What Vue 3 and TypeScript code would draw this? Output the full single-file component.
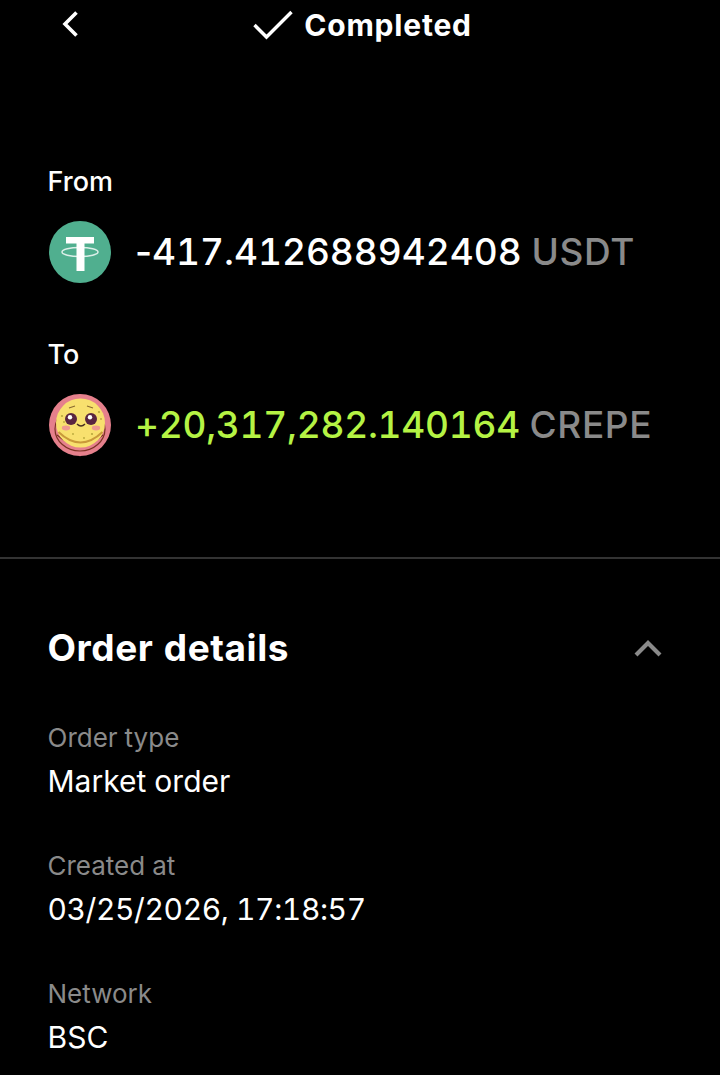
<template>
  <div class="page">
    <header class="topbar">
      <svg class="back" width="20" height="28" viewBox="0 0 20 28">
        <path d="M16.5 2.5 L5 14 L16.5 25.5" fill="none" stroke="#fff" stroke-width="3.6" />
      </svg>
      <div class="status">
        <svg width="40" height="30" viewBox="0 0 40 30">
          <path d="M1.5 15 L13.5 27 L38.5 2" fill="none" stroke="#fff" stroke-width="3.4" />
        </svg>
        <span>Completed</span>
      </div>
    </header>

    <section class="swap">
      <div class="side-label">From</div>
      <div class="amount-row">
        <svg class="coin" width="64" height="64" viewBox="0 0 64 64">
          <circle cx="32" cy="32" r="31" fill="#50af8f" />
          <path d="M18 17 H46 V23.5 H36.5 V51 H28.5 V23.5 H18 Z" fill="#fff" />
          <ellipse cx="32" cy="32" rx="18" ry="4.5" fill="none" stroke="#fff" stroke-width="1.5" opacity="0.8" />
        </svg>
        <div class="amount"><span class="sign">-</span>417.412688942408 <span class="symbol">USDT</span></div>
      </div>

      <div class="side-label to">To</div>
      <div class="amount-row">
        <svg class="coin" width="64" height="64" viewBox="0 0 64 64">
          <circle cx="32" cy="32" r="31" fill="#e5808c" />
          <ellipse cx="32" cy="36" rx="25" ry="22" fill="none" stroke="#7c3324" stroke-width="1.2" />
          <path d="M9 42 Q32 62 55 42" fill="none" stroke="#7c3324" stroke-width="1.2" />
          <circle cx="32.5" cy="30" r="24.5" fill="#f8e06e" />
          <path d="M10.5 39 Q32.5 60 54.5 39" fill="none" stroke="#c99a3a" stroke-width="2" />
          <circle cx="23" cy="26" r="6" fill="#5a2540" />
          <circle cx="43" cy="26" r="6" fill="#5a2540" />
          <circle cx="22" cy="24.2" r="2.2" fill="#fff" />
          <circle cx="42" cy="24.2" r="2.2" fill="#fff" />
          <ellipse cx="18" cy="35" rx="4.2" ry="2.4" fill="#f09a8f" />
          <ellipse cx="48" cy="35" rx="4.2" ry="2.4" fill="#f09a8f" />
          <path d="M29 31 Q33 35 37 31" fill="none" stroke="#4a3020" stroke-width="1.4" />
          <path d="M21 15 L27 13 M45 15 L39 13" fill="none" stroke="#8a6a30" stroke-width="1.2" />
          <g fill="#b8a83c">
            <circle cx="14" cy="23" r="1.1" />
            <circle cx="16" cy="29" r="0.9" />
            <circle cx="51" cy="19" r="1.1" />
            <circle cx="53" cy="26" r="0.9" />
            <circle cx="44" cy="41" r="1.1" />
            <circle cx="36" cy="45" r="0.9" />
            <circle cx="25" cy="41" r="0.9" />
          </g>
          <path d="M30 61 L34 61 L32 63.5 Z" fill="#e5808c" />
        </svg>
        <div class="amount gain">+20,317,282.140164 <span class="symbol">CREPE</span></div>
      </div>
    </section>

    <hr class="divider" />

    <section class="details">
      <div class="details-head">
        <h2>Order details</h2>
        <svg width="30" height="18" viewBox="0 0 30 18">
          <path d="M3 16 L15 4 L27 16" fill="none" stroke="#8a8a8a" stroke-width="4.2" />
        </svg>
      </div>
      <div v-for="row in rows" :key="row.label" class="detail">
        <div class="detail-label">{{ row.label }}</div>
        <div class="detail-value" :class="{ stamp: row.stamp }">{{ row.value }}</div>
      </div>
    </section>
  </div>
</template>

<script setup lang="ts">
const rows = [
  { label: 'Order type', value: 'Market order' },
  { label: 'Created at', value: '03/25/2026, 17:18:57', stamp: true },
  { label: 'Network', value: 'BSC' },
]
</script>

<style>
html,
body {
  background: #000;
}
</style>

<style scoped>
.page {
  height: 1075px;
  overflow: hidden;
  background: #000;
  color: #fff;
  font-family: Inter, "Noto Sans", sans-serif;
  font-variant-numeric: tabular-nums;
}

.topbar {
  display: flex;
  align-items: center;
  justify-content: center;
  height: 50px;
  position: relative;
}

.back {
  position: absolute;
  left: 60px;
  top: 10px;
}

.status {
  display: flex;
  align-items: center;
  gap: 11px;
  margin-left: 5px;
  font-size: 30px;
  font-weight: 700;
  letter-spacing: 0.8px;
}

.swap {
  padding: 114px 48px 0;
}

.side-label {
  margin-left: -0.5px;
  font-size: 27px;
  line-height: 36px;
  font-weight: 500;
}

.side-label.to {
  margin-top: 53px;
}

.amount-row {
  display: flex;
  align-items: center;
  gap: 24px;
  margin-top: 20px;
  height: 64px;
}

.coin {
  flex: none;
}

.amount {
  margin-left: -1px;
  font-size: 37px;
  font-weight: 500;
  white-space: nowrap;
  position: relative;
  top: -1px;
}

.sign {
  font-variant-numeric: normal;
}

.gain {
  color: #b5f344;
  letter-spacing: -0.25px;
}

.symbol {
  color: #8a8a8a;
  letter-spacing: 0.6px;
}

.divider {
  margin: 100px 0 0;
  border: 0;
  height: 2px;
  background: #333;
}

.details {
  padding: 0 48px;
}

.details-head {
  display: flex;
  align-items: center;
  justify-content: space-between;
  padding: 65px 9px 49px 0;
}

h2 {
  margin: 0 0 0 -0.5px;
  font-size: 37px;
  line-height: 48px;
  font-weight: 700;
  letter-spacing: 0.55px;
}

.detail {
  margin-bottom: 46px;
}

.detail-label {
  margin: 0 0 4px -0.5px;
  font-size: 26px;
  line-height: 34px;
  color: #8a8a8a;
}

.detail-value {
  margin-left: -0.5px;
  font-size: 30px;
  line-height: 44px;
}

.stamp {
  letter-spacing: -0.4px;
}
</style>
